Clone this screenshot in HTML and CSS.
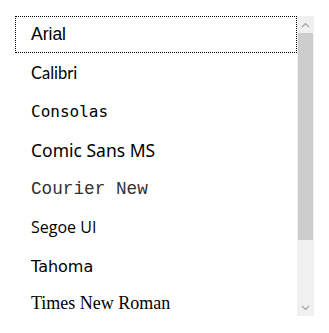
FILE: index.html
```html
<!DOCTYPE html>
<html lang="en">
<head>
  <meta charset="UTF-8" />
  <title>Font list</title>
  <link rel="stylesheet" href="styles.css">
</head>
<body>

<div class="listbox">
  <ul class="fonts">
    <li class="item focused f-arial">Arial</li>
    <li class="item f-calibri">Calibri</li>
    <li class="item f-consolas">Consolas</li>
    <li class="item f-comic">Comic Sans MS</li>
    <li class="item f-courier">Courier New</li>
    <li class="item f-segoe">Segoe UI</li>
    <li class="item f-tahoma">Tahoma</li>
    <li class="item f-times">Times New Roman</li>
  </ul>

  <div class="scrollbar">
    <div class="arrow">
      <svg width="9" height="6" viewBox="0 0 9 6"><path d="M1 5 L4.5 1.5 L8 5" fill="none" stroke="#a3a3a3" stroke-width="1.2"/></svg>
    </div>
    <div class="thumb"></div>
    <div class="track"></div>
    <div class="arrow">
      <svg width="9" height="6" viewBox="0 0 9 6"><path d="M1 1 L4.5 4.5 L8 1" fill="none" stroke="#a3a3a3" stroke-width="1.2"/></svg>
    </div>
  </div>
</div>

</body>
</html>
```

FILE: styles.css
```css
* {
  box-sizing: border-box;
}

body {
  margin: 0;
  padding: 16px 0 0 15px;
  background: #ffffff;
}

.listbox {
  display: flex;
  width: 299px;
  height: 300px;
  overflow: hidden;
}

.fonts {
  list-style: none;
  margin: 0;
  padding: 0;
  width: 282px;
  display: flex;
  flex-direction: column;
  gap: 1.7px;
}

.item {
  flex: none;
  height: 37px;
  padding: 0 0 1px 16px;
  display: flex;
  align-items: center;
  color: #000;
  font-size: 17px;
  white-space: nowrap;
}

.focused {
  outline: 1px dotted #000;
  outline-offset: -1px;
}

.f-arial { font-family: "Liberation Sans", Arial, sans-serif; font-size: 17.5px; }
.f-calibri { font-family: Lato, sans-serif; font-size: 16.5px; }
.f-consolas { font-family: "DejaVu Sans Mono", monospace; font-size: 16px; }
.f-comic { font-family: "Comic Sans MS", "Noto Sans", sans-serif; font-size: 17.5px; }
.f-courier { font-family: "Liberation Mono", monospace; font-size: 17.7px; color: #333; }
.f-segoe { font-family: "Open Sans", sans-serif; font-size: 16px; }
.f-tahoma { font-family: "DejaVu Sans", sans-serif; font-size: 16px; }
.f-times { font-family: "Liberation Serif", serif; font-size: 18px; padding-bottom: 4px; }

.scrollbar {
  width: 17px;
  height: 300px;
  display: flex;
  flex-direction: column;
  background: #f0f0f0;
}

.arrow {
  height: 17px;
  display: flex;
  align-items: center;
  justify-content: center;
}

.thumb {
  height: 207px;
  margin: 0 1px;
  background: #cdcdcd;
}

.track {
  flex: 1;
}
```
